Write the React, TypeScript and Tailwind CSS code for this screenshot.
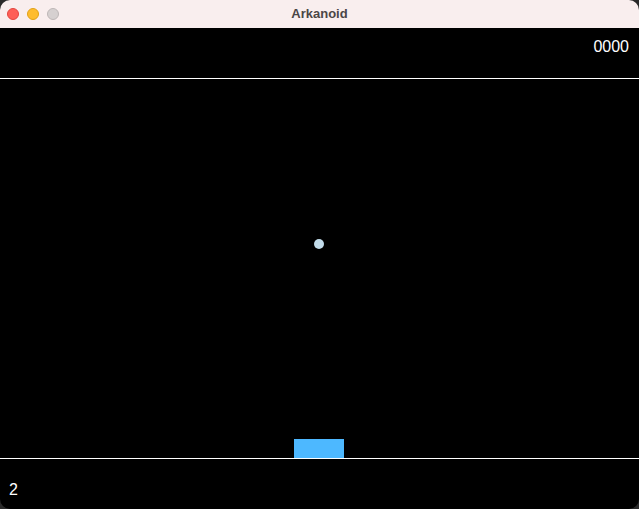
import React from 'react';

const ui = { fontFamily: '"Liberation Sans", Arial, sans-serif' };

function TrafficLights() {
  return (
    <div className="absolute left-[7px] top-[8px] flex gap-[8px]">
      <span className="block h-[12px] w-[12px] rounded-full bg-[#fe5f57] border border-[#e2463f]" />
      <span className="block h-[12px] w-[12px] rounded-full bg-[#febc2e] border border-[#e1a116]" />
      <span className="block h-[12px] w-[12px] rounded-full bg-[#d6d0d0] border border-[#bdb6b6]" />
    </div>
  );
}

export default function App() {
  const score = 0;
  const lives = 2;
  const ball = { x: 319, y: 244 - 79 };
  const paddle = { x: 294, w: 50 };

  return (
    <div className="h-[509px] w-[639px] bg-[#2a2a2a]" style={ui}>
      <div className="flex h-full w-full flex-col overflow-hidden rounded-[10px] bg-black">
        {/* title bar */}
        <div className="relative flex h-[28px] shrink-0 items-center justify-center bg-[#f9eeee]">
          <TrafficLights />
          <span className="text-[13px] font-bold text-[#4b4646]">Arkanoid</span>
        </div>

        {/* score */}
        <div className="flex h-[50px] shrink-0 items-start justify-end pr-[10px] pt-[7px] text-[16px] text-white">
          {String(score).padStart(4, '0')}
        </div>
        <div className="h-px shrink-0 bg-white" />

        {/* field */}
        <div className="relative h-[379px] shrink-0">
          <div
            className="absolute h-[10px] w-[10px] rounded-full bg-[#c2dcea]"
            style={{ left: ball.x - 5, top: ball.y - 5 }}
          />
          <div
            className="absolute bottom-0 h-[19px] bg-[#4db8ff]"
            style={{ left: paddle.x, width: paddle.w }}
          />
        </div>
        <div className="h-px shrink-0 bg-white" />

        {/* lives */}
        <div className="flex flex-1 items-start pl-[9px] pt-[19px] text-[16px] text-white">
          {lives}
        </div>
      </div>
    </div>
  );
}
